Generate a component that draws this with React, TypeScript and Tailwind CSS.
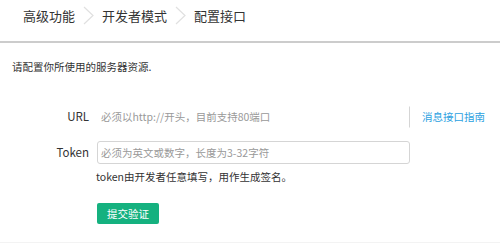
import React from "react";

const Chevron = () => (
  <svg width="11" height="19" viewBox="0 0 11 19" className="mx-[8px] shrink-0">
    <path d="M1 1 L10 9.5 L1 18" fill="none" stroke="#e0e0e0" strokeWidth="1.2" />
  </svg>
);

export default function App() {
  return (
    <div
      className="w-[500px] h-[247px] bg-white overflow-hidden text-[#333] flex flex-col"
      style={{ fontFamily: '"Noto Sans CJK SC", "Liberation Sans", sans-serif' }}
    >
      <div className="h-[41px] flex items-center pl-[23px] pb-[10px] text-[13px] text-[#333]">
        <span>高级功能</span>
        <Chevron />
        <span>开发者模式</span>
        <Chevron />
        <span>配置接口</span>
      </div>
      <div className="h-[2px] bg-[#cccccc]" />
      <div className="pl-[12px] pt-[17px] text-[10.5px] leading-[14px]">请配置你所使用的服务器资源.</div>
      <div className="mt-[32px] flex flex-col">
        <div className="flex items-center h-[22px]">
          <div className="w-[89px] text-right text-[11.5px]">URL</div>
          <div className="ml-[8px] w-[313px] h-[22px] border border-transparent border-r-[#d5d5d5] flex items-center pl-[3px] text-[10.5px] text-[#999]">
            必须以http://开头，目前支持80端口
          </div>
          <a className="ml-[12px] text-[10.5px] text-[#2ba1df]">消息接口指南</a>
        </div>
        <div className="flex items-center h-[23px] mt-[13px]">
          <div className="w-[89px] text-right text-[11.5px]">Token</div>
          <div className="ml-[8px] w-[313px] h-[23px] border border-[#d5d5d5] rounded-[3px] flex items-center pl-[3px] text-[10.5px] text-[#999]">
            必须为英文或数字，长度为3-32字符
          </div>
        </div>
        <div className="pl-[96px] mt-[6px] text-[10.5px] leading-[14px]">token由开发者任意填写，用作生成签名。</div>
        <div className="pl-[97px] mt-[19px]">
          <button className="w-[62px] h-[21px] bg-[#15b17f] text-white text-[10.5px] rounded-[2px] flex items-center justify-center">
            提交验证
          </button>
        </div>
      </div>
      <div className="flex-1" />
      <div className="h-[1px] bg-[#f3f3f3] mb-[4px]" />
    </div>
  );
}
